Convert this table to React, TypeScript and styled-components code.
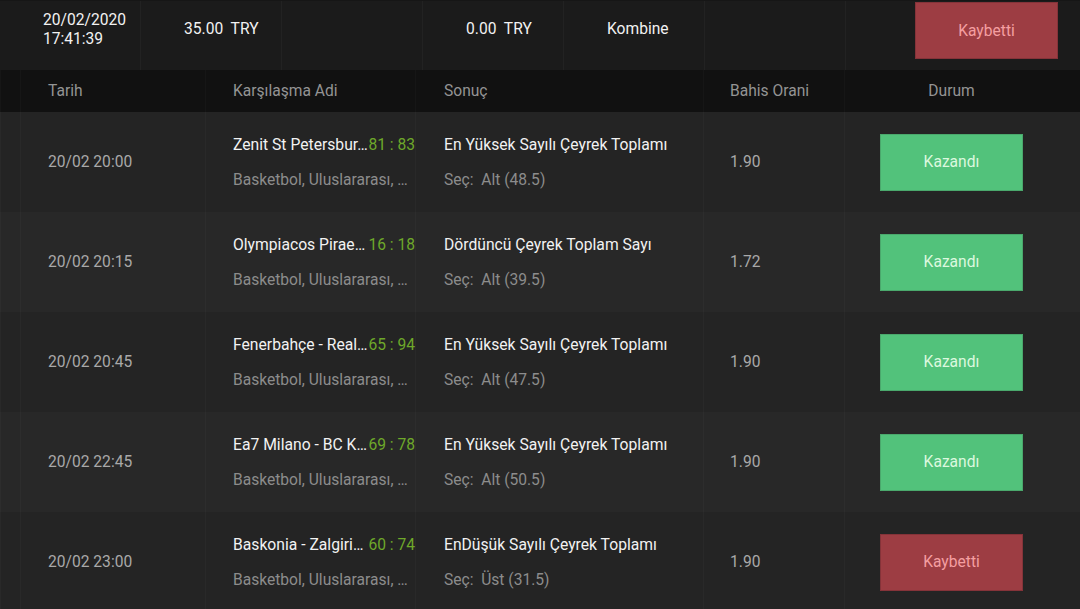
import React from "react";
import styled, { createGlobalStyle } from "styled-components";

const GlobalStyle = createGlobalStyle`
  html, body {
    margin: 0;
    padding: 0;
    background: #242424;
    overflow: hidden;
  }
  body {
    font-family: Roboto, "Liberation Sans", Arial, sans-serif;
  }
`;

const Page = styled.div`
  width: 1080px;
  height: 609px;
  overflow: hidden;
  background: #242424;
`;

const TopBar = styled.div`
  display: grid;
  grid-template-columns: repeat(6, 141px) 1fr;
  height: 70px;
  background: #1b1b1b;
  border-top: 1px solid #161616;
  box-sizing: border-box;
`;

const TopCell = styled.div`
  display: flex;
  flex-direction: column;
  justify-content: center;
  padding: 0 0 12px 43px;
  border-right: 1px solid #222222;
  color: #f2f2f2;
  font-size: 15.6px;
  line-height: 18.5px;
  white-space: pre;
`;

const TopStatusCell = styled.div`
  display: flex;
  justify-content: flex-end;
  align-items: flex-start;
  padding: 1px 22px 0 0;
`;

const StatusButton = styled.div<{ $won?: boolean }>`
  display: flex;
  align-items: center;
  justify-content: center;
  width: 143px;
  height: 57px;
  box-sizing: border-box;
  background: ${(p) => (p.$won ? "#52c27b" : "#9d3d43")};
  border: 1px solid ${(p) => (p.$won ? "#4aa86c" : "#853339")};
  color: ${(p) => (p.$won ? "#dcf8df" : "#f49fa1")};
  font-size: 15.6px;
`;

const Grid = styled.div`
  display: grid;
  grid-template-columns: 20px 185px 210px 288px 141px 1fr;
`;

const HeaderRow = styled(Grid)`
  height: 42px;
  background: #111111;
`;

const HeaderCell = styled.div<{ $pad?: number; $center?: boolean }>`
  display: flex;
  align-items: center;
  justify-content: ${(p) => (p.$center ? "center" : "flex-start")};
  padding-left: ${(p) => p.$pad ?? 0}px;
  padding-right: ${(p) => (p.$center ? 22 : 0)}px;
  border-left: 1px solid #161616;
  color: #949494;
  font-size: 15.6px;
`;

const Row = styled(Grid)<{ $alt: boolean }>`
  height: 100px;
  background: ${(p) => (p.$alt ? "#282828" : "#242424")};
`;

const Cell = styled.div<{ $pad?: number }>`
  display: flex;
  flex-direction: column;
  justify-content: center;
  min-width: 0;
  padding-left: ${(p) => p.$pad ?? 0}px;
  border-left: 1px solid rgba(255, 255, 255, 0.025);
  gap: 15px;
`;

const DateText = styled.div`
  color: #a9a9a9;
  font-size: 15.6px;
`;

const Line = styled.div`
  display: flex;
  line-height: 20px;
  min-width: 0;
`;

const Title = styled.span`
  flex: 1;
  min-width: 0;
  overflow: hidden;
  white-space: nowrap;
  text-overflow: ellipsis;
  color: #f2f2f2;
  font-size: 15.7px;
`;

const Score = styled.span`
  flex: none;
  color: #6ea82a;
  font-size: 15.6px;
`;

const Sub = styled.span`
  overflow: hidden;
  white-space: pre;
  text-overflow: ellipsis;
  color: #8c8c8c;
  font-size: 15.6px;
`;

const Odds = styled.div`
  color: #a9a9a9;
  font-size: 15.6px;
`;

const StatusCell = styled.div`
  display: flex;
  align-items: center;
  justify-content: center;
  padding-right: 22px;
  border-left: 1px solid rgba(255, 255, 255, 0.025);
`;

interface Bet {
  date: string;
  match: string;
  score: string;
  market: string;
  pick: string;
  odds: string;
  won: boolean;
}

const bets: Bet[] = [
  {
    date: "20/02 20:00",
    match: "Zenit St Petersbur…",
    score: "81 : 83",
    market: "En Yüksek Sayılı Çeyrek Toplamı",
    pick: "Seç:  Alt (48.5)",
    odds: "1.90",
    won: true,
  },
  {
    date: "20/02 20:15",
    match: "Olympiacos Pirae…",
    score: "16 : 18",
    market: "Dördüncü Çeyrek Toplam Sayı",
    pick: "Seç:  Alt (39.5)",
    odds: "1.72",
    won: true,
  },
  {
    date: "20/02 20:45",
    match: "Fenerbahçe - Real…",
    score: "65 : 94",
    market: "En Yüksek Sayılı Çeyrek Toplamı",
    pick: "Seç:  Alt (47.5)",
    odds: "1.90",
    won: true,
  },
  {
    date: "20/02 22:45",
    match: "Ea7 Milano - BC K…",
    score: "69 : 78",
    market: "En Yüksek Sayılı Çeyrek Toplamı",
    pick: "Seç:  Alt (50.5)",
    odds: "1.90",
    won: true,
  },
  {
    date: "20/02 23:00",
    match: "Baskonia - Zalgiri…",
    score: "60 : 74",
    market: "EnDüşük Sayılı Çeyrek Toplamı",
    pick: "Seç:  Üst (31.5)",
    odds: "1.90",
    won: false,
  },
];

const App: React.FC = () => {
  return (
    <Page>
      <GlobalStyle />
      <TopBar>
        <TopCell>
          <div>20/02/2020</div>
          <div>17:41:39</div>
        </TopCell>
        <TopCell>35.00  TRY</TopCell>
        <TopCell />
        <TopCell>0.00  TRY</TopCell>
        <TopCell>Kombine</TopCell>
        <TopCell />
        <TopStatusCell>
          <StatusButton>Kaybetti</StatusButton>
        </TopStatusCell>
      </TopBar>

      <HeaderRow>
        <HeaderCell />
        <HeaderCell $pad={27}>Tarih</HeaderCell>
        <HeaderCell $pad={27}>Karşılaşma Adi</HeaderCell>
        <HeaderCell $pad={28}>Sonuç</HeaderCell>
        <HeaderCell $pad={26}>Bahis Orani</HeaderCell>
        <HeaderCell $center>Durum</HeaderCell>
      </HeaderRow>

      {bets.map((bet, i) => (
        <Row key={bet.date} $alt={i % 2 === 1}>
          <Cell />
          <Cell $pad={27}>
            <DateText>{bet.date}</DateText>
          </Cell>
          <Cell $pad={27}>
            <Line>
              <Title>{bet.match}</Title>
              <Score>{bet.score}</Score>
            </Line>
            <Line>
              <Sub>Basketbol, Uluslararası, …</Sub>
            </Line>
          </Cell>
          <Cell $pad={28}>
            <Line>
              <Title>{bet.market}</Title>
            </Line>
            <Line>
              <Sub>{bet.pick}</Sub>
            </Line>
          </Cell>
          <Cell $pad={26}>
            <Odds>{bet.odds}</Odds>
          </Cell>
          <StatusCell>
            <StatusButton $won={bet.won}>
              {bet.won ? "Kazandı" : "Kaybetti"}
            </StatusButton>
          </StatusCell>
        </Row>
      ))}
    </Page>
  );
};

export default App;
